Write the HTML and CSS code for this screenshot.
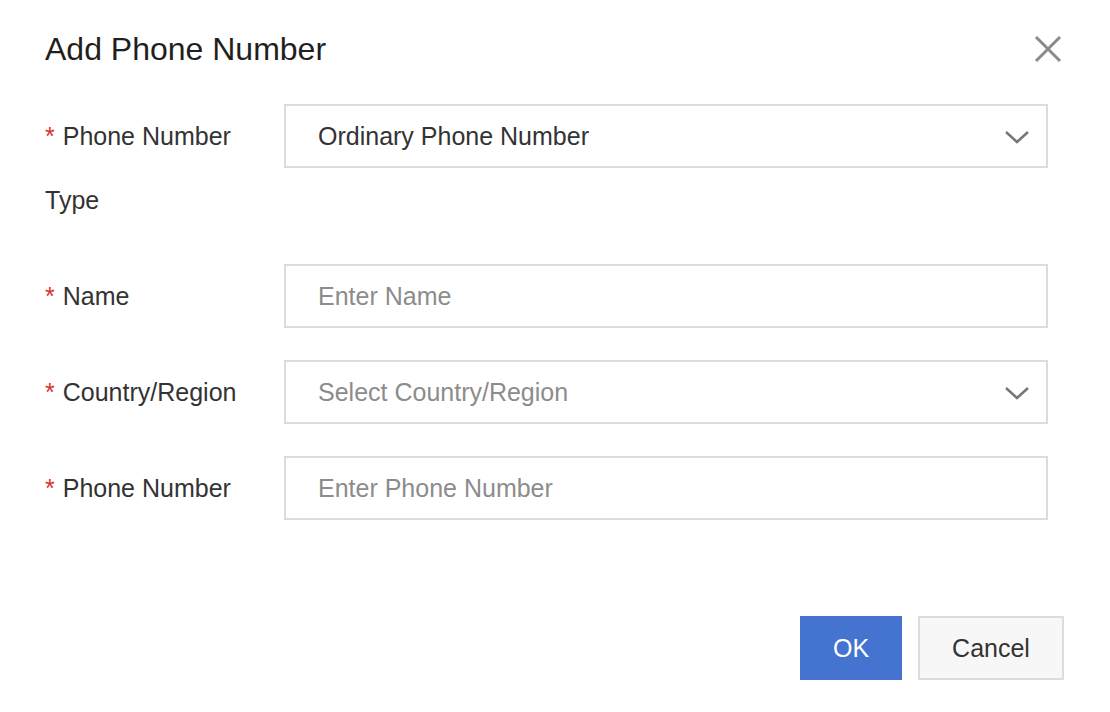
FILE: index.html
```html
<!DOCTYPE html>
<html>
<head>
<meta charset="utf-8">
<link rel="stylesheet" href="styles.css">
</head>
<body>
<div class="dialog">
  <div class="header">
    <h1 class="title">Add Phone Number</h1>
    <button class="close" aria-label="Close">
      <svg width="28" height="28" viewBox="0 0 28 28"><path d="M2 2 L26 26 M26 2 L2 26" stroke="#8a8a8a" stroke-width="3" fill="none"/></svg>
    </button>
  </div>
  <form class="form">
    <div class="row">
      <div class="label"><span class="req">*</span>Phone Number Type</div>
      <div class="field select">
        <span class="value">Ordinary Phone Number</span>
        <svg class="chev" width="26" height="14" viewBox="0 0 26 14"><path d="M2 2 L13 12 L24 2" stroke="#777" stroke-width="2.5" fill="none"/></svg>
      </div>
    </div>
    <div class="row">
      <div class="label"><span class="req">*</span>Name</div>
      <div class="field"><span class="placeholder">Enter Name</span></div>
    </div>
    <div class="row">
      <div class="label"><span class="req">*</span>Country/Region</div>
      <div class="field select">
        <span class="placeholder">Select Country/Region</span>
        <svg class="chev" width="26" height="14" viewBox="0 0 26 14"><path d="M2 2 L13 12 L24 2" stroke="#777" stroke-width="2.5" fill="none"/></svg>
      </div>
    </div>
    <div class="row">
      <div class="label"><span class="req">*</span>Phone Number</div>
      <div class="field"><span class="placeholder">Enter Phone Number</span></div>
    </div>
  </form>
  <div class="footer">
    <button class="btn primary">OK</button>
    <button class="btn">Cancel</button>
  </div>
</div>
</body>
</html>
```

FILE: styles.css
```css
* { box-sizing: border-box; }
html, body { margin: 0; padding: 0; background: #fff; }
body { font-family: "Liberation Sans", Arial, sans-serif; color: #333; }

.dialog { padding: 24px 46px 0 45px; }

.header {
  display: flex;
  align-items: center;
  justify-content: space-between;
  height: 50px;
}
.title {
  margin: 0;
  font-size: 32px;
  font-weight: normal;
  color: #1f1f1f;
}
.close {
  border: none;
  background: none;
  padding: 0;
  margin-right: 2px;
  width: 28px;
  height: 28px;
  display: flex;
}

.form {
  margin-top: 30px;
  padding-right: 16px;
  display: flex;
  flex-direction: column;
  gap: 32px;
}
.row {
  display: grid;
  grid-template-columns: 239px 1fr;
  align-items: start;
}
.label {
  font-size: 25px;
  line-height: 64px;
  color: #333;
  padding-right: 20px;
}
.req {
  color: #d9312b;
  margin-right: 8px;
}
.field {
  height: 64px;
  border: 2px solid #dcdcdc;
  padding: 1px 16px 0 32px;
  display: flex;
  align-items: center;
  justify-content: space-between;
  font-size: 25px;
  background: #fff;
}
.value { color: #333; }
.placeholder { color: #8c8c8c; }

.footer {
  margin-top: 96px;
  display: flex;
  justify-content: flex-end;
  gap: 16px;
}
.btn {
  height: 64px;
  font-family: "Liberation Sans", Arial, sans-serif;
  font-size: 25px;
  border: 2px solid #dcdcdc;
  background: #f7f7f7;
  color: #333;
  padding: 1px 0 0;
  width: 146px;
}
.btn.primary {
  width: 102px;
  background: #4473d0;
  border-color: #4473d0;
  color: #fff;
}
```
